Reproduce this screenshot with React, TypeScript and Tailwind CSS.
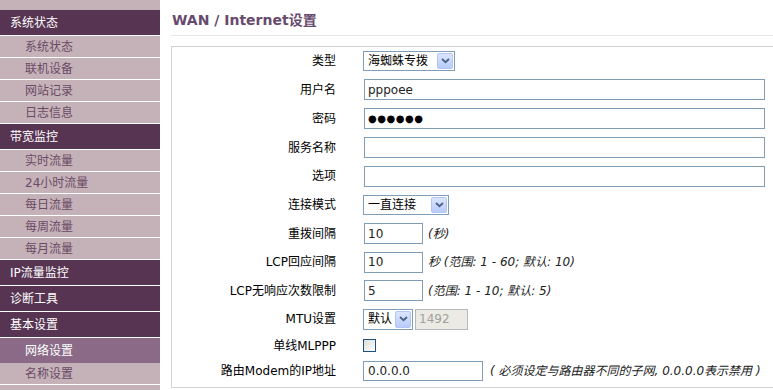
import React from "react";

const font = "font-['DejaVu_Sans','Noto_Sans_CJK_SC',sans-serif]";

type NavItem = { label: string; kind: "head" | "sub" | "active" };

const nav: NavItem[] = [
  { label: "系统状态", kind: "head" },
  { label: "系统状态", kind: "sub" },
  { label: "联机设备", kind: "sub" },
  { label: "网站记录", kind: "sub" },
  { label: "日志信息", kind: "sub" },
  { label: "带宽监控", kind: "head" },
  { label: "实时流量", kind: "sub" },
  { label: "24小时流量", kind: "sub" },
  { label: "每日流量", kind: "sub" },
  { label: "每周流量", kind: "sub" },
  { label: "每月流量", kind: "sub" },
  { label: "IP流量监控", kind: "head" },
  { label: "诊断工具", kind: "head" },
  { label: "基本设置", kind: "head" },
  { label: "网络设置", kind: "active" },
  { label: "名称设置", kind: "sub" },
];

function Sidebar() {
  return (
    <div className="w-[160px] shrink-0 bg-[#c5b2b9]">
      <div className="h-[10px]" />
      {nav.map((n, i) => {
        if (n.kind === "head")
          return (
            <div
              key={i}
              className="flex h-[26px] items-center border-b border-white bg-[#573452] pl-[10px] text-[12px] text-white"
            >
              {n.label}
            </div>
          );
        if (n.kind === "active")
          return (
            <div key={i} className="flex h-[25px] items-center bg-[#8a6a86] pl-[25px] text-[12px] text-white">
              {n.label}
            </div>
          );
        return (
          <div
            key={i}
            className="flex h-[22px] items-center border-b border-white pl-[25px] text-[12px] text-[#6a4a64]"
          >
            {n.label}
          </div>
        );
      })}
    </div>
  );
}

function Arrow() {
  return (
    <span className="flex h-full w-[16px] items-center justify-center rounded-[2px] border border-[#b3c6f3] bg-gradient-to-b from-[#dbe5fe] to-[#b8ccfb]">
      <svg width="9" height="6" viewBox="0 0 9 6">
        <path d="M1 1l3.5 3.2L8 1" stroke="#4d6185" strokeWidth="1.8" fill="none" />
      </svg>
    </span>
  );
}

function Select({ value, w, h }: { value: string; w: string; h: string }) {
  return (
    <div className={`flex items-stretch border border-[#7f9db9] bg-white p-px ${w} ${h}`}>
      <span className="flex flex-1 items-center pl-[3px] text-[12px] text-black">{value}</span>
      <Arrow />
    </div>
  );
}

function TextBox({ value, w, dots }: { value?: string; w: string; dots?: boolean }) {
  return (
    <div className={`ml-px flex h-[21px] items-center border border-[#7f9db9] bg-white pl-[3px] ${w}`}>
      {dots ? (
        <span className="text-[10px] tracking-[0.5px] text-black">●●●●●●</span>
      ) : (
        <span className="text-[12px] text-[#222]">{value}</span>
      )}
    </div>
  );
}

function Hint({ children, ml }: { children: React.ReactNode; ml: string }) {
  return <span className={`${ml} text-[12px] italic text-[#222]`}>{children}</span>;
}

type Row = { label: string; h: string; control: React.ReactNode };

const rows: Row[] = [
  { label: "类型", h: "h-[28px]", control: <Select value="海蜘蛛专拨" w="w-[92px]" h="h-[20px]" /> },
  { label: "用户名", h: "h-[29px]", control: <TextBox value="pppoee" w="w-[401px]" /> },
  { label: "密码", h: "h-[29px]", control: <TextBox dots w="w-[401px]" /> },
  { label: "服务名称", h: "h-[29px]", control: <TextBox w="w-[401px]" /> },
  { label: "选项", h: "h-[28px]", control: <TextBox w="w-[401px]" /> },
  { label: "连接模式", h: "h-[29px]", control: <Select value="一直连接" w="w-[86px]" h="h-[20px]" /> },
  {
    label: "重拨间隔",
    h: "h-[29px]",
    control: (
      <>
        <TextBox value="10" w="w-[59px]" />
        <Hint ml="ml-[5px]">(秒)</Hint>
      </>
    ),
  },
  {
    label: "LCP回应间隔",
    h: "h-[28px]",
    control: (
      <>
        <TextBox value="10" w="w-[59px]" />
        <Hint ml="ml-[5px]">秒 (范围: 1 - 60; 默认: 10)</Hint>
      </>
    ),
  },
  {
    label: "LCP无响应次数限制",
    h: "h-[29px]",
    control: (
      <>
        <TextBox value="5" w="w-[59px]" />
        <Hint ml="ml-[5px]">(范围: 1 - 10; 默认: 5)</Hint>
      </>
    ),
  },
  {
    label: "MTU设置",
    h: "h-[28px]",
    control: (
      <>
        <Select value="默认" w="w-[50px]" h="h-[21px]" />
        <div className="ml-[2px] flex h-[21px] w-[53px] items-center border border-[#b5b8bd] bg-[#ebebe4] pl-[3px] text-[12px] text-[#a0a0a0]">
          1492
        </div>
      </>
    ),
  },
  {
    label: "单线MLPPP",
    h: "h-[25px]",
    control: (
      <span className="block h-[13px] w-[13px] border border-[#1c5180] bg-gradient-to-br from-[#dcdcd7] to-white" />
    ),
  },
  {
    label: "路由Modem的IP地址",
    h: "h-[25px]",
    control: (
      <>
        <div className="flex h-[20px] w-[120px] items-center border border-[#7f9db9] bg-white pl-[4px] text-[12px] text-[#222]">
          0.0.0.0
        </div>
        <Hint ml="ml-[7px]">( 必须设定与路由器不同的子网, 0.0.0.0表示禁用 )</Hint>
      </>
    ),
  },
];

export default function App() {
  return (
    <div className={`flex h-[390px] w-[773px] overflow-hidden bg-white ${font}`}>
      <Sidebar />
      <div className="shrink-0 pl-[11px]">
        <div className="flex h-[36px] w-[620px] items-start border-b border-[#e6e6e6] pl-px pt-[10px]">
          <h1 className="text-[14px] font-bold leading-[20px] text-[#684a6e]">WAN / Internet设置</h1>
        </div>
        <div className="mt-[10px] w-[620px] border border-[#d3d3d3] pb-[4px]">
          {rows.map((r, i) => (
            <div key={i} className={`flex items-center ${r.h}`}>
              <div className="w-[164px] text-right text-[12px] text-black">{r.label}</div>
              <div className="ml-[27px] flex items-center">{r.control}</div>
            </div>
          ))}
        </div>
      </div>
    </div>
  );
}
